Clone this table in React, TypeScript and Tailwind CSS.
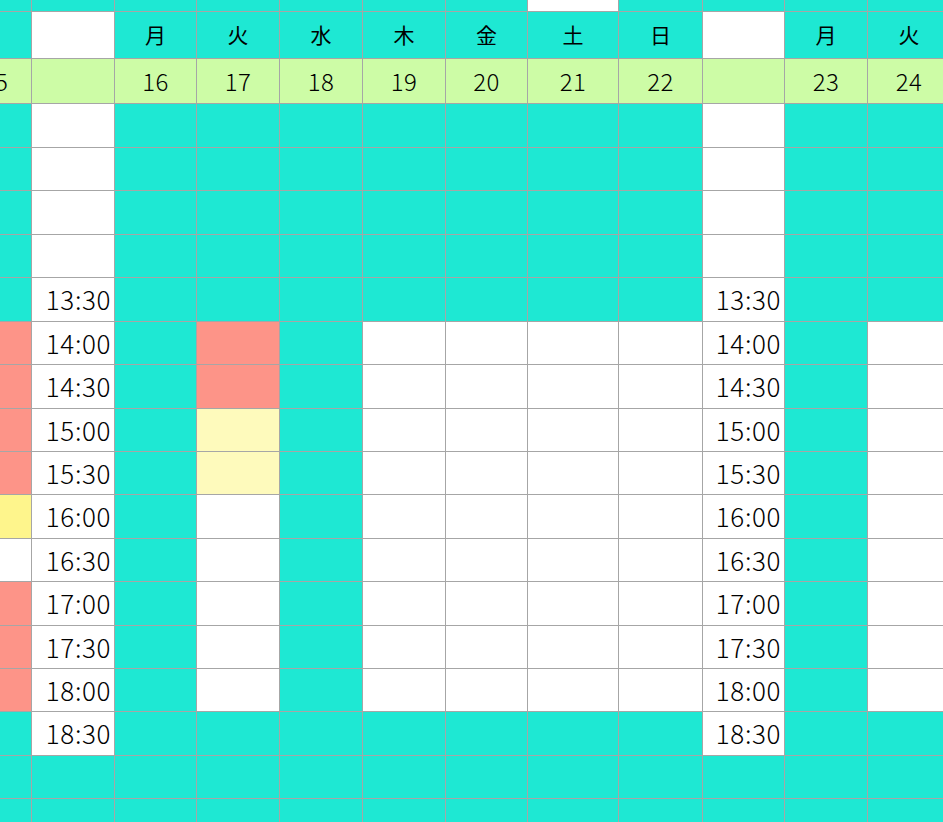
const colors: Record<string, string> = {
  t: "bg-[#1ee8d3]",
  w: "bg-white",
  s: "bg-[#fd9488]",
  y: "bg-[#fefabc]",
  Y: "bg-[#fef58c]",
  g: "bg-[#cdfca6]",
};

// columns: prev, time, 月16, 火17, 水18, 木19, 金20, 土21, 日22, time, 月23, 火24
const rows: { fill: string; text?: string[]; kind?: "head" | "time" }[] = [
  { fill: "tttttttwtttt" },
  { fill: "twtttttttwtt", kind: "head", text: ["", "", "月", "火", "水", "木", "金", "土", "日", "", "月", "火"] },
  { fill: "gggggggggggg", kind: "head", text: ["15", "", "16", "17", "18", "19", "20", "21", "22", "", "23", "24"] },
  { fill: "twtttttttwtt" },
  { fill: "twtttttttwtt" },
  { fill: "twtttttttwtt" },
  { fill: "twtttttttwtt" },
  { fill: "twtttttttwtt", kind: "time", text: ["13:30"] },
  { fill: "swtstwwwwwtw", kind: "time", text: ["14:00"] },
  { fill: "swtstwwwwwtw", kind: "time", text: ["14:30"] },
  { fill: "swtytwwwwwtw", kind: "time", text: ["15:00"] },
  { fill: "swtytwwwwwtw", kind: "time", text: ["15:30"] },
  { fill: "Ywtwtwwwwwtw", kind: "time", text: ["16:00"] },
  { fill: "wwtwtwwwwwtw", kind: "time", text: ["16:30"] },
  { fill: "swtwtwwwwwtw", kind: "time", text: ["17:00"] },
  { fill: "swtwtwwwwwtw", kind: "time", text: ["17:30"] },
  { fill: "swtwtwwwwwtw", kind: "time", text: ["18:00"] },
  { fill: "twtttttttwtt", kind: "time", text: ["18:30"] },
  { fill: "tttttttttttt" },
  { fill: "tttttttttttt" },
];

const timeCols = [1, 9];

export default function App() {
  return (
    <div className="h-[822px] w-[943px] overflow-hidden bg-white font-['Noto_Sans_CJK_JP','Noto_Sans',sans-serif] text-black">
      <div className="-ml-[41px] -mt-[33px] grid w-max grid-cols-[72px_82px_81px_82px_82px_82px_81px_90px_83px_81px_82px_82px] grid-rows-[44px_46px_44px_43px_42px_43px_42px_43px_42px_43px_42px_42px_43px_42px_43px_42px_42px_43px_42px_43px] gap-px bg-[#a6a6a6]">
        {rows.map((row, r) =>
          row.fill.split("").map((c, i) => {
            let label = "";
            if (row.kind === "head") label = row.text?.[i] ?? "";
            if (row.kind === "time" && timeCols.includes(i)) label = row.text?.[0] ?? "";
            const isTime = row.kind === "time";
            return (
              <div
                key={`${r}-${i}`}
                className={`flex items-center ${colors[c]} ${
                  isTime
                    ? "justify-end pb-[2px] pr-[3px] text-[26px] font-light tracking-[0.6px]"
                    : r === 1
                      ? "justify-center text-[21px]"
                      : "justify-center text-[24px] font-light tracking-[0.5px]"
                }`}
              >
                {label}
              </div>
            );
          })
        )}
      </div>
    </div>
  );
}
